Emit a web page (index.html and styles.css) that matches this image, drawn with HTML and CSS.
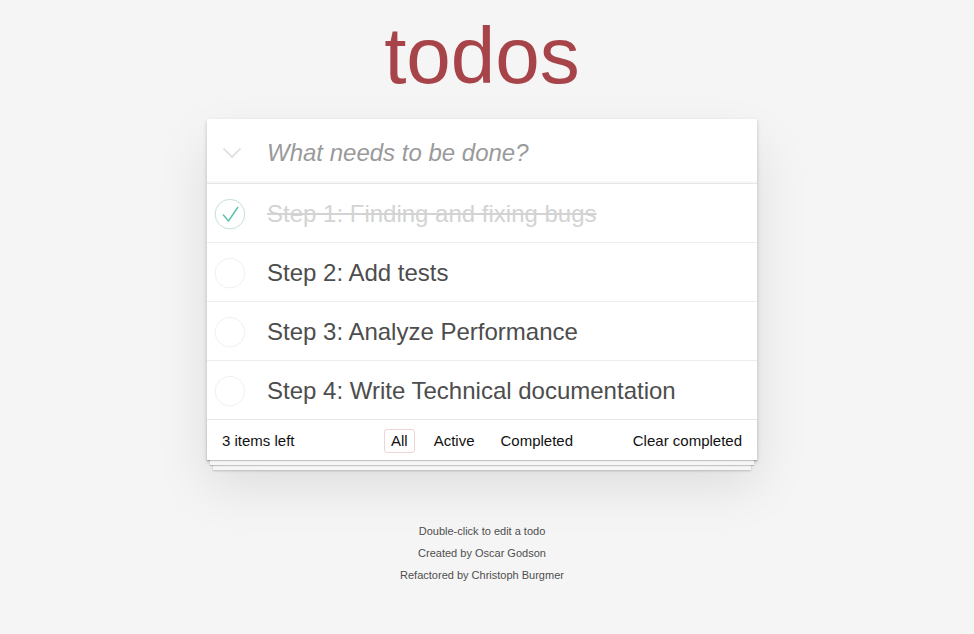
FILE: index.html
```html
<!DOCTYPE html>
<html lang="en">
<head>
<meta charset="utf-8">
<title>todos</title>
<link rel="stylesheet" href="styles.css">
</head>
<body>
<div class="page">
<section class="app">
  <h1 class="title">todos</h1>
  <div class="card">
    <header class="new-row">
      <span class="toggle-all">
        <svg width="20" height="12" viewBox="0 0 20 12"><polyline points="1.5,1.5 10,10 18.5,1.5" fill="none" stroke="#e3e3e3" stroke-width="2"/></svg>
      </span>
      <span class="new-todo">What needs to be done?</span>
    </header>
    <ul class="list">
      <li class="item done">
        <svg class="check" width="40" height="40" viewBox="-10 -18 100 135"><circle cx="50" cy="50" r="50" fill="none" stroke="#bddad5" stroke-width="3"/><polyline points="26.5,51.3 45,73.2 77.2,25.9" fill="none" stroke="#5dc2af" stroke-width="5"/></svg>
        <span class="label">Step 1: Finding and fixing bugs</span>
      </li>
      <li class="item">
        <svg class="check" width="40" height="40" viewBox="-10 -18 100 135"><circle cx="50" cy="50" r="50" fill="none" stroke="#ededed" stroke-width="3"/></svg>
        <span class="label">Step 2: Add tests</span>
      </li>
      <li class="item">
        <svg class="check" width="40" height="40" viewBox="-10 -18 100 135"><circle cx="50" cy="50" r="50" fill="none" stroke="#ededed" stroke-width="3"/></svg>
        <span class="label">Step 3: Analyze Performance</span>
      </li>
      <li class="item">
        <svg class="check" width="40" height="40" viewBox="-10 -18 100 135"><circle cx="50" cy="50" r="50" fill="none" stroke="#ededed" stroke-width="3"/></svg>
        <span class="label">Step 4: Write Technical documentation</span>
      </li>
    </ul>
    <footer class="bar">
      <span class="count">3 items left</span>
      <ul class="filters">
        <li><a class="filter selected">All</a></li>
        <li><a class="filter">Active</a></li>
        <li><a class="filter">Completed</a></li>
      </ul>
      <span class="clear">Clear completed</span>
    </footer>
  </div>
</section>
<footer class="info">
  <p>Double-click to edit a todo</p>
  <p>Created by Oscar Godson</p>
  <p>Refactored by Christoph Burgmer</p>
</footer>
</div>
</body>
</html>
```

FILE: styles.css
```css
html, body {
  margin: 0;
  padding: 0;
}
body {
  background: #f5f5f5;
  font-family: "Liberation Sans", Arial, sans-serif;
  font-size: 14px;
  line-height: 1.4em;
  color: #111;
}
.page {
  padding-right: 10px;
}
.app {
  width: 550px;
  margin: 0 auto;
  padding-top: 10px;
}
.title {
  margin: 0;
  font-size: 80px;
  font-weight: 400;
  line-height: 92px;
  text-align: center;
  color: #a7444a;
  height: 109px;
}
.card {
  background: #fff;
  box-shadow: 0 2px 4px 0 rgba(0,0,0,0.2), 0 25px 50px 0 rgba(0,0,0,0.1);
}
.new-row {
  display: flex;
  align-items: center;
  height: 64px;
  box-shadow: inset 0 -2px 1px rgba(0,0,0,0.03);
}
.toggle-all {
  width: 60px;
  display: flex;
  justify-content: center;
  padding-top: 3px;
  padding-right: 10px;
  box-sizing: border-box;
}
.toggle-all svg { display: block; }
.new-todo {
  font-size: 24px;
  font-style: italic;
  color: #9a9a9a;
  line-height: 1.4em;
  padding-top: 3px;
}
.list {
  list-style: none;
  margin: 0;
  padding: 0;
  border-top: 1px solid #e6e6e6;
}
.item {
  display: flex;
  align-items: center;
  height: 58px;
  border-bottom: 1px solid #ededed;
}
.item:last-child { border-bottom: none; }
.check { display: block; flex: none; margin-top: 1px; }
.label {
  padding: 1px 0 0 20px;
  font-size: 24px;
  line-height: 28px;
  color: #4d4d4d;
}
.done .label {
  color: #d3d3d3;
  text-decoration: line-through;
}
.bar {
  display: grid;
  grid-template-columns: 1fr auto 1fr;
  align-items: center;
  box-sizing: border-box;
  height: 41px;
  padding: 2px 15px 0;
  border-top: 1px solid #e6e6e6;
  font-size: 15px;
  color: #111;
  box-shadow: 0 1px 1px rgba(0,0,0,0.2), 0 8px 0 -3px #f6f6f6, 0 9px 1px -3px rgba(0,0,0,0.2), 0 16px 0 -6px #f6f6f6, 0 17px 2px -6px rgba(0,0,0,0.2);
}
.count { justify-self: start; }
.clear { justify-self: end; }
.filters {
  list-style: none;
  margin: 0;
  padding: 0;
  display: flex;
  gap: 12px;
}
.filter {
  display: block;
  padding: 2px 6px;
  line-height: 18px;
  border: 1px solid transparent;
  border-radius: 3px;
  color: #111;
}
.filter.selected { border-color: rgba(175,47,47,0.2); }
.info {
  margin-top: 66px;
  text-align: center;
  font-size: 11px;
  color: #4d4d4d;
  text-shadow: 0 1px 0 rgba(255,255,255,0.5);
}
.info p {
  margin: 11px 0;
  line-height: 1;
}
```
